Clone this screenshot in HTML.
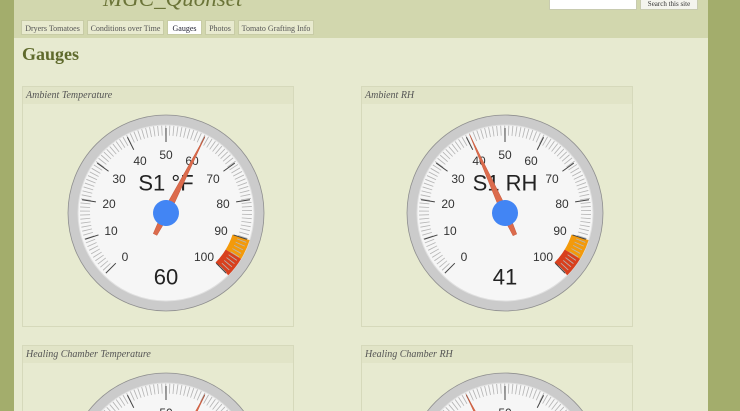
<!DOCTYPE html>
<html style="overflow:hidden;width:740px;height:411px"><head><meta charset="utf-8"><style>
html,body{margin:0;width:740px;height:411px;overflow:hidden}
body{background:#a3ad6c;font-family:"Liberation Serif",serif;position:relative}
#wrap{position:absolute;left:14px;top:0;width:694px;height:411px;background:#e7ead0;overflow:hidden}
#hdr{position:absolute;left:0;top:0;width:694px;height:38px;background:#d2d7ae}
.title{position:absolute;left:89px;top:-14px;font-style:italic;font-size:23px;color:#6b7438}
.sbox{position:absolute;left:535px;top:-2px;width:86px;height:10px;background:#fff;border:1px solid #c8cbb0}
.sbtn{position:absolute;left:626px;top:-2px;width:56px;height:10px;background:#f4f4ee;border:1px solid #c8cbb0;font-size:7px;text-align:center;line-height:10px;color:#333}
.tab{position:absolute;top:20px;height:15px;line-height:15px;font-size:8px;color:#555;background:#e8eacf;border:1px solid #c8cca6;text-align:center;box-sizing:border-box}
.tab.on{background:#fff;color:#223}
h1{position:absolute;left:8px;top:44px;margin:0;font-size:18px;color:#5f6a2c;font-weight:bold}
.panel{position:absolute;width:272px;height:241px;border:1px solid #d6d9bb;box-sizing:border-box;background:#e7ead0}
.panel.b{height:66px;border-bottom:none}
.panel .pt{height:17px;background:#e1e4c7;font-style:italic;font-size:10px;color:#555;line-height:17px;padding-left:3px}
svg{position:absolute;left:0;top:0}
</style></head><body>
<div id="wrap">
<div id="hdr">
<div class="title">MGC_Quonset</div>
<div class="sbox"></div><div class="sbtn">Search this site</div>
<div class="tab" style="left:7px;width:63px">Dryers Tomatoes</div>
<div class="tab" style="left:73px;width:77px">Conditions over Time</div>
<div class="tab on" style="left:153px;width:35px">Gauges</div>
<div class="tab" style="left:191px;width:30px">Photos</div>
<div class="tab" style="left:224px;width:76px">Tomato Grafting Info</div>
</div>
<h1>Gauges</h1>
<div class="panel" style="left:8px;top:86px"><div class="pt">Ambient Temperature</div></div>
<div class="panel" style="left:347px;top:86px"><div class="pt">Ambient RH</div></div>
<div class="panel b" style="left:8px;top:345px"><div class="pt">Healing Chamber Temperature</div></div>
<div class="panel b" style="left:347px;top:345px"><div class="pt">Healing Chamber RH</div></div>
</div>
<svg width="740" height="411" viewBox="0 0 740 411" font-family="Liberation Sans, sans-serif">
<defs>
<clipPath id="c"><rect x="0" y="0" width="740" height="411"/></clipPath>
<g id="face">
<circle r="98" fill="#cbcbcb" stroke="#8f8f8f" stroke-width="0.8"/>
<circle r="88" fill="#f6f6f6" stroke="#e0e0e0" stroke-width="1"/>
<path d="M75.1 24.4 A79 79 0 0 1 67.4 41.2" fill="none" stroke="#f39a0b" stroke-width="18"/>
<path d="M67.4 41.2 A79 79 0 0 1 55.9 55.9" fill="none" stroke="#d8401e" stroke-width="18"/>
<path d="M-56.57 56.57 A81 81 0 1 1 56.57 56.57" pathLength="100" fill="none" stroke="#b5b5b5" stroke-width="10" stroke-dasharray="0.22 0.78" stroke-dashoffset="0.11"/>
<g stroke="#444" stroke-width="1">
<line x1="0" y1="-71" x2="0" y2="-85" transform="rotate(-135)"/>
<line x1="0" y1="-71" x2="0" y2="-85" transform="rotate(-108)"/>
<line x1="0" y1="-71" x2="0" y2="-85" transform="rotate(-81)"/>
<line x1="0" y1="-71" x2="0" y2="-85" transform="rotate(-54)"/>
<line x1="0" y1="-71" x2="0" y2="-85" transform="rotate(-27)"/>
<line x1="0" y1="-71" x2="0" y2="-85"/>
<line x1="0" y1="-71" x2="0" y2="-85" transform="rotate(27)"/>
<line x1="0" y1="-71" x2="0" y2="-85" transform="rotate(54)"/>
<line x1="0" y1="-71" x2="0" y2="-85" transform="rotate(81)"/>
<line x1="0" y1="-71" x2="0" y2="-85" transform="rotate(108)"/>
<line x1="0" y1="-71" x2="0" y2="-85" transform="rotate(135)"/>
</g>
<g font-size="12" fill="#333" text-anchor="middle" dominant-baseline="central">
<text x="-41" y="44">0</text><text x="-55" y="18">10</text><text x="-57" y="-9">20</text>
<text x="-47" y="-34">30</text><text x="-26" y="-52">40</text><text x="0" y="-58">50</text>
<text x="26" y="-52">60</text><text x="47" y="-34">70</text><text x="57" y="-9">80</text>
<text x="55" y="18">90</text><text x="38" y="44">100</text>
</g>
</g>
<g id="needle"><polygon points="0,-86 3.5,0 2,24 -2,24 -3.5,0" fill="#dc6b4c" stroke="#c85a3c" stroke-width="0.5"/><circle r="13" fill="#4285f4"/></g>
</defs>
<g transform="translate(166,213)"><use href="#face"/>
<text x="0" y="-30" font-size="22" text-anchor="middle" dominant-baseline="central" fill="#222">S1 °F</text>
<text x="0" y="64" font-size="22" text-anchor="middle" dominant-baseline="central" fill="#222">60</text>
<use href="#needle" transform="rotate(27)"/></g>
<g transform="translate(505,213)"><use href="#face"/>
<text x="0" y="-30" font-size="22" text-anchor="middle" dominant-baseline="central" fill="#222">S1 RH</text>
<text x="0" y="64" font-size="22" text-anchor="middle" dominant-baseline="central" fill="#222">41</text>
<use href="#needle" transform="rotate(-24.3)"/></g>
<g clip-path="url(#c)">
<g transform="translate(166,471)"><use href="#face"/><use href="#needle" transform="rotate(27)"/></g>
<g transform="translate(505,471)"><use href="#face"/><use href="#needle" transform="rotate(-27)"/></g>
</g>
</svg>
</body></html>
